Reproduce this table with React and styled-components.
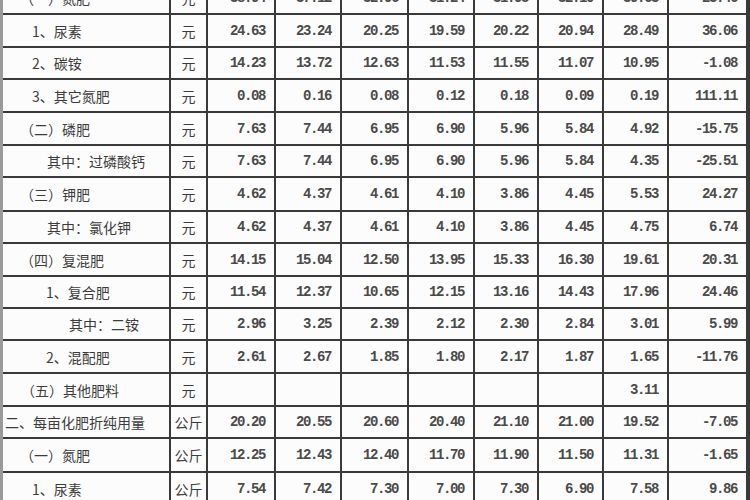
import React from "react";
import styled, { createGlobalStyle } from "styled-components";

const Global = createGlobalStyle`
  html, body { margin: 0; padding: 0; background: #fbfbfb; overflow: hidden; }
  body { width: 750px; height: 500px; }
`;

const Frame = styled.div`
  width: 750px;
  height: 500px;
  overflow: hidden;
  background: #f4f4f4;
`;

const Sheet = styled.div`
  margin-top: -18px;
  width: 745px;
  border-left: 3px solid #9a9a9a;
  display: grid;
  grid-template-columns: 166px 35px 66px 64px 65px 64px 62px 63px 63px 77px;
  grid-template-rows: 31px 31px 30px 31px 31px 30px 32px 30px 31px 30px 30px 31px 31px 30px 32px 31px;
  gap: 2px;
  padding-right: 2px;
  background: #3a3a3a;
`;

const Cell = styled.div`
  background: #fcfcfc;
  display: flex;
  align-items: center;
  overflow: hidden;
  white-space: nowrap;
`;

const LabelCell = styled(Cell)`
  padding-left: ${(p) => p.$indent}px;
  font-family: "Noto Sans CJK SC", "Noto Sans", sans-serif;
  font-size: 14px;
  color: #3c3c3c;
`;

const UnitCell = styled(Cell)`
  justify-content: center;
  font-family: "Noto Sans CJK SC", "Noto Sans", sans-serif;
  font-size: 14px;
  color: #3c3c3c;
`;

const NumCell = styled(Cell)`
  justify-content: flex-end;
  padding-right: 9px;
  font-family: "Liberation Mono", monospace;
  font-weight: 700;
  font-size: 14px;
  letter-spacing: -1.4px;
  color: #4a4a4a;
`;

const rows = [
  ["（一）氮肥", 17, "元", ["38.94", "37.12", "32.96", "31.24", "31.95", "32.10", "39.63", "23.46"]],
  ["1、尿素", 29, "元", ["24.63", "23.24", "20.25", "19.59", "20.22", "20.94", "28.49", "36.06"]],
  ["2、碳铵", 29, "元", ["14.23", "13.72", "12.63", "11.53", "11.55", "11.07", "10.95", "-1.08"]],
  ["3、其它氮肥", 29, "元", ["0.08", "0.16", "0.08", "0.12", "0.18", "0.09", "0.19", "111.11"]],
  ["（二）磷肥", 17, "元", ["7.63", "7.44", "6.95", "6.90", "5.96", "5.84", "4.92", "-15.75"]],
  ["其中：过磷酸钙", 44, "元", ["7.63", "7.44", "6.95", "6.90", "5.96", "5.84", "4.35", "-25.51"]],
  ["（三）钾肥", 17, "元", ["4.62", "4.37", "4.61", "4.10", "3.86", "4.45", "5.53", "24.27"]],
  ["其中：氯化钾", 44, "元", ["4.62", "4.37", "4.61", "4.10", "3.86", "4.45", "4.75", "6.74"]],
  ["（四）复混肥", 17, "元", ["14.15", "15.04", "12.50", "13.95", "15.33", "16.30", "19.61", "20.31"]],
  ["1、复合肥", 43, "元", ["11.54", "12.37", "10.65", "12.15", "13.16", "14.43", "17.96", "24.46"]],
  ["其中：二铵", 66, "元", ["2.96", "3.25", "2.39", "2.12", "2.30", "2.84", "3.01", "5.99"]],
  ["2、混配肥", 43, "元", ["2.61", "2.67", "1.85", "1.80", "2.17", "1.87", "1.65", "-11.76"]],
  ["（五）其他肥料", 18, "元", ["", "", "", "", "", "", "3.11", ""]],
  ["二、每亩化肥折纯用量", 2, "公斤", ["20.20", "20.55", "20.60", "20.40", "21.10", "21.00", "19.52", "-7.05"]],
  ["（一）氮肥", 17, "公斤", ["12.25", "12.43", "12.40", "11.70", "11.90", "11.50", "11.31", "-1.65"]],
  ["1、尿素", 29, "公斤", ["7.54", "7.42", "7.30", "7.00", "7.30", "6.90", "7.58", "9.86"]],
];

export default function App() {
  return (
    <Frame>
      <Global />
      <Sheet>
        {rows.map(([label, indent, unit, nums], r) => (
          <React.Fragment key={r}>
            <LabelCell $indent={indent}>{label}</LabelCell>
            <UnitCell>{unit}</UnitCell>
            {nums.map((n, c) => (
              <NumCell key={c}>{n}</NumCell>
            ))}
          </React.Fragment>
        ))}
      </Sheet>
    </Frame>
  );
}
